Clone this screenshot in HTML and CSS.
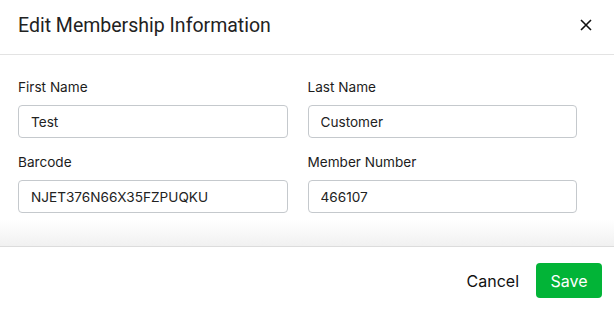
FILE: index.html
```html
<!DOCTYPE html>
<html lang="en">
<head>
  <meta charset="UTF-8">
  <meta name="viewport" content="width=device-width, initial-scale=1.0">
  <title>Edit Membership Information</title>
  <link rel="stylesheet" href="styles.css">
</head>
<body>
  <div class="modal">
    <div class="modal-header">
      <h2>Edit Membership Information</h2>
      <button class="close-btn" aria-label="Close">
        <svg width="12" height="12" viewBox="0 0 12 12">
          <path d="M1 1 L11 11 M11 1 L1 11" stroke="#111" stroke-width="1.6" fill="none"/>
        </svg>
      </button>
    </div>

    <div class="modal-body">
      <div class="form-grid">
        <div class="field">
          <label>First Name</label>
          <input type="text" value="Test">
        </div>
        <div class="field">
          <label>Last Name</label>
          <input type="text" value="Customer">
        </div>
        <div class="field">
          <label>Barcode</label>
          <input type="text" value="NJET376N66X35FZPUQKU">
        </div>
        <div class="field">
          <label>Member Number</label>
          <input type="text" value="466107">
        </div>
      </div>
      <div class="scroll-shadow"></div>
    </div>

    <div class="modal-footer">
      <button class="btn-link">Cancel</button>
      <button class="btn-save">Save</button>
    </div>
  </div>
</body>
</html>
```

FILE: styles.css
```css
body {
  font-family: Inter, "Helvetica Neue", Arial, sans-serif;
  margin: 0;
  padding: 0;
  background: #fff;
  color: #1c1c1c;
}
.modal {
  width: 614px;
  height: 311px;
  overflow: hidden;
  background: #fff;
}
.modal-header {
  display: flex;
  align-items: center;
  justify-content: space-between;
  height: 54px;
  padding: 0 22px 0 18px;
  border-bottom: 1px solid #e3e3e3;
}
.modal-header h2 {
  margin: 0;
  font-family: Roboto, "Helvetica Neue", Arial, sans-serif;
  font-size: 19.5px;
  font-weight: 400;
  color: #222;
  padding-bottom: 4px;
}
.close-btn {
  border: none;
  background: none;
  padding: 0;
  display: flex;
  cursor: pointer;
  margin-bottom: 4px;
}
.modal-body {
  padding: 22px 37px 0 18px;
}
.form-grid {
  display: grid;
  grid-template-columns: 1fr 1fr;
  column-gap: 20px;
  row-gap: 14px;
}
.field label {
  display: block;
  font-size: 13.6px;
  line-height: 20px;
  margin-bottom: 8px;
}
.field input {
  display: block;
  box-sizing: border-box;
  width: 100%;
  height: 33px;
  padding: 0 12px;
  border: 1px solid #c5c9cd;
  border-radius: 4px;
  font-family: inherit;
  font-size: 13.6px;
  color: #222;
  outline: none;
}
.scroll-shadow {
  height: 26px;
  margin: 7px -37px 0 -18px;
  background: linear-gradient(to bottom, #fff, #f1f1f1);
}
.modal-footer {
  display: flex;
  justify-content: flex-end;
  align-items: center;
  gap: 17px;
  padding: 16px 12px 0 0;
  border-top: 1px solid #dcdcdc;
}
.btn-link {
  border: none;
  background: none;
  font-family: inherit;
  font-size: 16px;
  color: #111;
  padding: 0;
  cursor: pointer;
}
.btn-save {
  width: 66px;
  height: 35px;
  border: none;
  border-radius: 4px;
  background: #02b437;
  color: #fff;
  font-family: inherit;
  font-size: 16px;
  cursor: pointer;
}
```
